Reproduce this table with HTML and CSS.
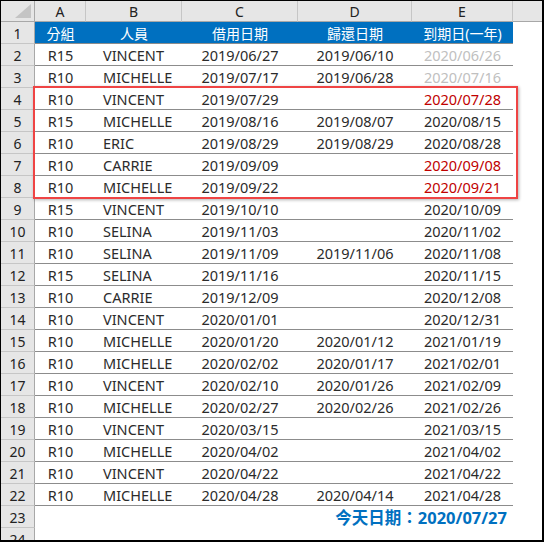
FILE: index.html
```html
<!DOCTYPE html>
<html>
<head>
<meta charset="utf-8">
<link rel="stylesheet" href="styles.css">
</head>
<body>
<div class="frame">
  <div class="row hdr">
    <div class="corner"><svg width="16" height="14" viewBox="0 0 16 14"><polygon points="16,0 16,14 0,14" fill="#c4c4c4"/></svg></div>
    <div class="ch">A</div><div class="ch">B</div><div class="ch">C</div><div class="ch">D</div><div class="ch">E</div><div class="ch last"></div>
  </div>
  <div class="row">
    <div class="rh">1</div>
    <div class="d blue">分組</div><div class="d blue">人員</div><div class="d blue">借用日期</div><div class="d blue">歸還日期</div><div class="d blue">到期日(一年)</div><div class="e"></div>
  </div>
  <div class="row"><div class="rh">2</div><div class="d">R15</div><div class="d name">VINCENT</div><div class="d">2019/06/27</div><div class="d">2019/06/10</div><div class="d past">2020/06/26</div><div class="e"></div></div>
  <div class="row"><div class="rh">3</div><div class="d">R10</div><div class="d name">MICHELLE</div><div class="d">2019/07/17</div><div class="d">2019/06/28</div><div class="d past">2020/07/16</div><div class="e"></div></div>
  <div class="row"><div class="rh">4</div><div class="d">R10</div><div class="d name">VINCENT</div><div class="d">2019/07/29</div><div class="d"></div><div class="d due">2020/07/28</div><div class="e"></div></div>
  <div class="row"><div class="rh">5</div><div class="d">R15</div><div class="d name">MICHELLE</div><div class="d">2019/08/16</div><div class="d">2019/08/07</div><div class="d">2020/08/15</div><div class="e"></div></div>
  <div class="row"><div class="rh">6</div><div class="d">R10</div><div class="d name">ERIC</div><div class="d">2019/08/29</div><div class="d">2019/08/29</div><div class="d">2020/08/28</div><div class="e"></div></div>
  <div class="row"><div class="rh">7</div><div class="d">R10</div><div class="d name">CARRIE</div><div class="d">2019/09/09</div><div class="d"></div><div class="d due">2020/09/08</div><div class="e"></div></div>
  <div class="row"><div class="rh">8</div><div class="d">R10</div><div class="d name">MICHELLE</div><div class="d">2019/09/22</div><div class="d"></div><div class="d due">2020/09/21</div><div class="e"></div></div>
  <div class="row"><div class="rh">9</div><div class="d">R15</div><div class="d name">VINCENT</div><div class="d">2019/10/10</div><div class="d"></div><div class="d">2020/10/09</div><div class="e"></div></div>
  <div class="row"><div class="rh">10</div><div class="d">R10</div><div class="d name">SELINA</div><div class="d">2019/11/03</div><div class="d"></div><div class="d">2020/11/02</div><div class="e"></div></div>
  <div class="row"><div class="rh">11</div><div class="d">R10</div><div class="d name">SELINA</div><div class="d">2019/11/09</div><div class="d">2019/11/06</div><div class="d">2020/11/08</div><div class="e"></div></div>
  <div class="row"><div class="rh">12</div><div class="d">R15</div><div class="d name">SELINA</div><div class="d">2019/11/16</div><div class="d"></div><div class="d">2020/11/15</div><div class="e"></div></div>
  <div class="row"><div class="rh">13</div><div class="d">R10</div><div class="d name">CARRIE</div><div class="d">2019/12/09</div><div class="d"></div><div class="d">2020/12/08</div><div class="e"></div></div>
  <div class="row"><div class="rh">14</div><div class="d">R10</div><div class="d name">VINCENT</div><div class="d">2020/01/01</div><div class="d"></div><div class="d">2020/12/31</div><div class="e"></div></div>
  <div class="row"><div class="rh">15</div><div class="d">R10</div><div class="d name">MICHELLE</div><div class="d">2020/01/20</div><div class="d">2020/01/12</div><div class="d">2021/01/19</div><div class="e"></div></div>
  <div class="row"><div class="rh">16</div><div class="d">R10</div><div class="d name">MICHELLE</div><div class="d">2020/02/02</div><div class="d">2020/01/17</div><div class="d">2021/02/01</div><div class="e"></div></div>
  <div class="row"><div class="rh">17</div><div class="d">R10</div><div class="d name">VINCENT</div><div class="d">2020/02/10</div><div class="d">2020/01/26</div><div class="d">2021/02/09</div><div class="e"></div></div>
  <div class="row"><div class="rh">18</div><div class="d">R10</div><div class="d name">MICHELLE</div><div class="d">2020/02/27</div><div class="d">2020/02/26</div><div class="d">2021/02/26</div><div class="e"></div></div>
  <div class="row"><div class="rh">19</div><div class="d">R10</div><div class="d name">VINCENT</div><div class="d">2020/03/15</div><div class="d"></div><div class="d">2021/03/15</div><div class="e"></div></div>
  <div class="row"><div class="rh">20</div><div class="d">R10</div><div class="d name">MICHELLE</div><div class="d">2020/04/02</div><div class="d"></div><div class="d">2021/04/02</div><div class="e"></div></div>
  <div class="row"><div class="rh">21</div><div class="d">R10</div><div class="d name">VINCENT</div><div class="d">2020/04/22</div><div class="d"></div><div class="d">2021/04/22</div><div class="e"></div></div>
  <div class="row"><div class="rh">22</div><div class="d">R10</div><div class="d name">MICHELLE</div><div class="d">2020/04/28</div><div class="d">2020/04/14</div><div class="d">2021/04/28</div><div class="e"></div></div>
  <div class="row"><div class="rh">23</div><div class="today">今天日期：2020/07/27</div><div class="e"></div></div>
  <div class="row"><div class="rh">24</div></div>
  <div class="highlight"></div>
</div>
</body>
</html>
```

FILE: styles.css
```css
html, body {
  margin: 0;
  padding: 0;
  background: #fff;
}

.frame {
  position: relative;
  width: 544px;
  height: 542px;
  box-sizing: border-box;
  border-style: solid;
  border-color: #000;
  border-width: 1px 2px 2px 1px;
  overflow: hidden;
  background: #fff;
  font-family: "Noto Sans", "Noto Sans CJK TC", sans-serif;
  font-size: 14.5px;
  color: #2b2b2b;
}

.row {
  display: grid;
  grid-template-columns: 34px 51px 96px 116px 114px 101px 1fr;
  height: 22px;
}

.row > div {
  box-sizing: border-box;
  display: flex;
  align-items: center;
  white-space: nowrap;
  overflow: hidden;
  min-width: 0;
}

.hdr {
  height: 21px;
  background: #e6e6e6;
}

.corner {
  justify-content: flex-end;
  align-items: flex-end !important;
  padding: 0 3px 3px 0;
  border-right: 1px solid #a8a8a8;
  border-bottom: 1px solid #a8a8a8;
}

.ch {
  justify-content: center;
  font-size: 14px;
  color: #222;
  border-right: 1px solid #c6c6c6;
  border-bottom: 1px solid #a8a8a8;
}

.ch.last {
  border-right: none;
}

.rh {
  justify-content: center;
  background: #e6e6e6;
  font-size: 14px;
  color: #222;
  padding-top: 1px;
  border-right: 1px solid #a8a8a8;
  border-bottom: 1px solid #c6c6c6;
}

.d {
  justify-content: center;
  border-bottom: 1px solid #8c8c8c;
}

.d.name {
  justify-content: flex-start;
  padding-left: 17px;
}

.blue {
  background: #0070c0;
  color: #fff;
  font-size: 14px;
}

.past {
  color: #c0c0c0;
}

.due {
  color: #c00000;
}

.today {
  grid-column: 2 / 7;
  justify-content: flex-end;
  padding-right: 6px;
  color: #0070c0;
  font-weight: bold;
  font-size: 16.5px;
}

.highlight {
  position: absolute;
  left: 32px;
  top: 85px;
  width: 485px;
  height: 113px;
  box-sizing: border-box;
  border: 2px solid #ef4444;
  box-shadow: 1px 1px 3px rgba(0, 0, 0, 0.3);
}
```
